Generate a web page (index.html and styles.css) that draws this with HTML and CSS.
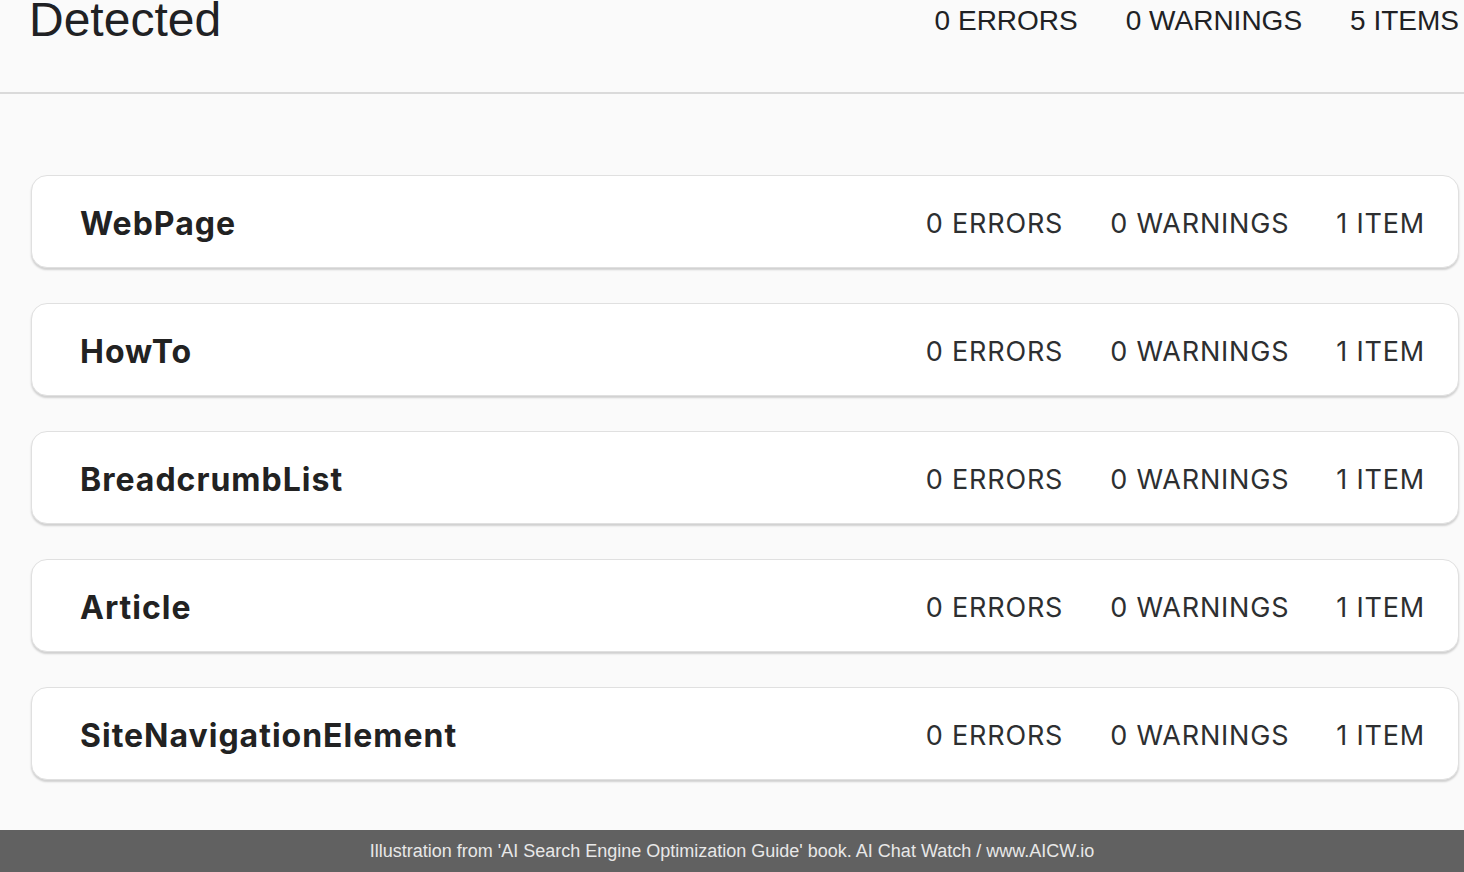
FILE: index.html
```html
<!DOCTYPE html>
<html lang="en">
<head>
<meta charset="utf-8">
<title>Detected</title>
<link rel="stylesheet" href="styles.css">
</head>
<body>
<header class="summary">
  <h1 class="summary-title">Detected</h1>
  <div class="summary-counts">
    <span>0 ERRORS</span>
    <span>0 WARNINGS</span>
    <span>5 ITEMS</span>
  </div>
</header>
<main class="cards">
  <section class="card">
    <h2 class="card-title">WebPage</h2>
    <div class="card-counts"><span>0 ERRORS</span><span>0 WARNINGS</span><span>1 ITEM</span></div>
  </section>
  <section class="card">
    <h2 class="card-title">HowTo</h2>
    <div class="card-counts"><span>0 ERRORS</span><span>0 WARNINGS</span><span>1 ITEM</span></div>
  </section>
  <section class="card">
    <h2 class="card-title">BreadcrumbList</h2>
    <div class="card-counts"><span>0 ERRORS</span><span>0 WARNINGS</span><span>1 ITEM</span></div>
  </section>
  <section class="card">
    <h2 class="card-title">Article</h2>
    <div class="card-counts"><span>0 ERRORS</span><span>0 WARNINGS</span><span>1 ITEM</span></div>
  </section>
  <section class="card">
    <h2 class="card-title">SiteNavigationElement</h2>
    <div class="card-counts"><span>0 ERRORS</span><span>0 WARNINGS</span><span>1 ITEM</span></div>
  </section>
</main>
<footer class="credit">Illustration from 'AI Search Engine Optimization Guide' book. AI Chat Watch / www.AICW.io</footer>
</body>
</html>
```
FILE: styles.css
```css
html, body {
  margin: 0;
  padding: 0;
}
body {
  background: #fafafa;
  color: #202124;
  font-family: "Liberation Sans", Arial, sans-serif;
  width: 1464px;
  height: 872px;
  overflow: hidden;
}
.summary {
  display: flex;
  justify-content: space-between;
  align-items: flex-start;
  height: 92px;
  padding: 0 5px 0 29px;
  border-bottom: 2px solid #dadada;
}
.summary-title {
  margin: -4px 0 0;
  font-size: 48px;
  line-height: 48px;
  font-weight: 400;
  color: #202124;
}
.summary-counts {
  display: flex;
  gap: 48px;
  margin-top: 7px;
  font-size: 28px;
  line-height: 28px;
  color: #202124;
}
.cards {
  display: flex;
  flex-direction: column;
  gap: 35px;
  padding: 81px 5px 0 31px;
}
.card {
  display: flex;
  justify-content: space-between;
  align-items: center;
  height: 88px;
  padding: 3px 34px 0 48px;
  background: #fff;
  border: 1px solid #e0e0e0;
  border-radius: 16px;
  box-shadow: 0 2px 2px rgba(0, 0, 0, 0.17);
}
.card-title {
  margin: 0;
  font-family: Inter, "Open Sans", sans-serif;
  font-size: 32px;
  font-weight: 700;
  letter-spacing: 1px;
  color: #222;
}
.card-counts {
  display: flex;
  gap: 47px;
  margin-right: -1px;
  font-family: Inter, "Open Sans", sans-serif;
  font-size: 27px;
  font-weight: 400;
  letter-spacing: 0.8px;
  color: #2d2f31;
}
.credit {
  position: fixed;
  left: 0;
  right: 0;
  bottom: 0;
  height: 42px;
  display: flex;
  align-items: center;
  justify-content: center;
  background: #616161;
  color: #e8e8e8;
  font-family: "Liberation Sans", Arial, sans-serif;
  font-size: 18px;
}
```
